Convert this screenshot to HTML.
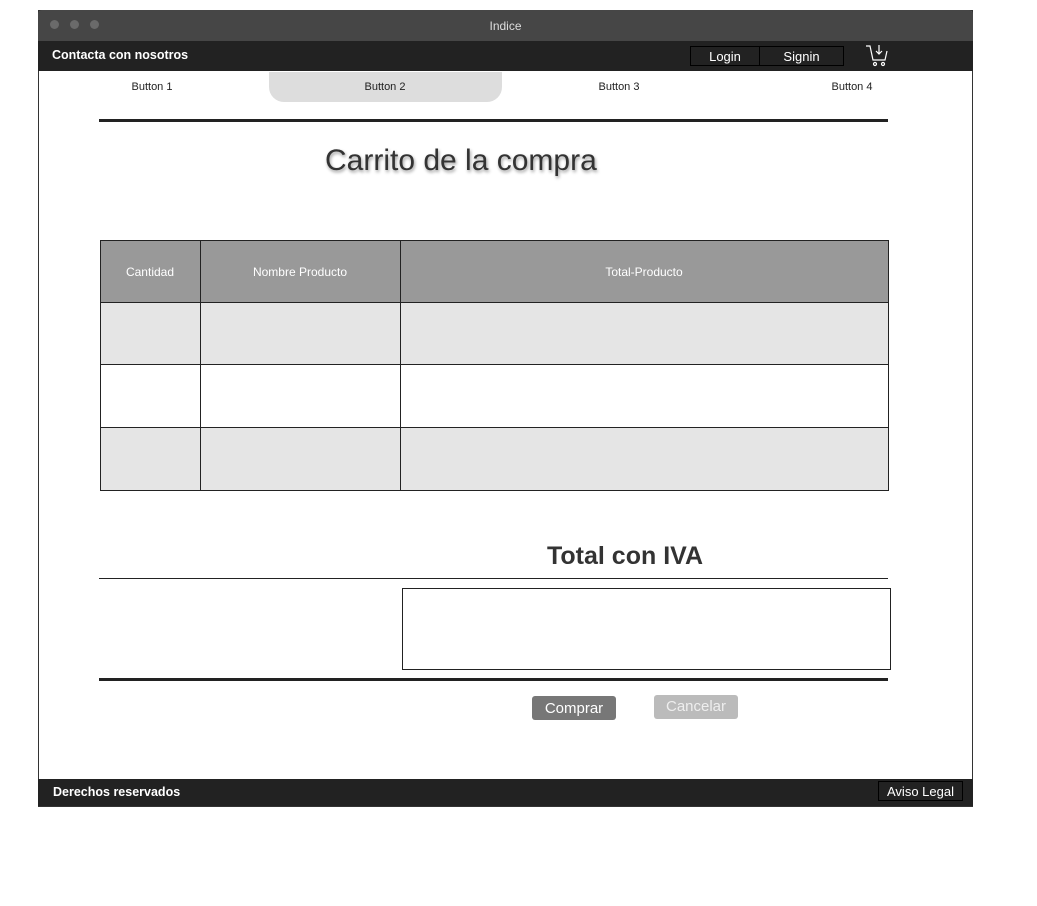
<!DOCTYPE html>
<html><head><style>
*{box-sizing:border-box;margin:0;padding:0}
body{width:1037px;height:906px;background:#fff;position:relative;font-family:"Liberation Sans",sans-serif;overflow:hidden}
.a{position:absolute}
</style></head><body>
<div class="a" style="left:38px;top:10px;width:935px;height:797px;border:1px solid #333;background:#fff"></div>
<div class="a" style="left:38px;top:10px;width:935px;height:31px;background:#464646;border-radius:4px 4px 0 0"></div>
<div class="a" style="left:50px;top:20px;width:9px;height:9px;border-radius:50%;background:#6a6a6a"></div>
<div class="a" style="left:70px;top:20px;width:9px;height:9px;border-radius:50%;background:#6a6a6a"></div>
<div class="a" style="left:90px;top:20px;width:9px;height:9px;border-radius:50%;background:#6a6a6a"></div>
<div class="a" style="left:38px;top:19px;width:935px;text-align:center;color:#ddd;font-size:12px">Indice</div>
<div class="a" style="left:38px;top:41px;width:935px;height:30px;background:#222"></div>
<div class="a" style="left:52px;top:48px;color:#fff;font-size:12.5px;font-weight:bold">Contacta con nosotros</div>
<div class="a" style="left:690px;top:46px;width:70px;height:20px;border:1px solid #000;color:#fff;font-size:13px;text-align:center;line-height:19px">Login</div>
<div class="a" style="left:759px;top:46px;width:85px;height:20px;border:1px solid #000;color:#fff;font-size:13px;text-align:center;line-height:19px">Signin</div>
<svg class="a" style="left:864px;top:43px" width="26" height="26" viewBox="0 0 26 26" fill="none" stroke="#fff" stroke-width="1.2"><path d="M2 3h4l3 14h12l2-9"/><path d="M15 2v9M12 8l3 3 3-3"/><circle cx="11" cy="21" r="1.5"/><circle cx="19" cy="21" r="1.5"/></svg>
<div class="a" style="left:269px;top:72px;width:233px;height:30px;background:#ddd;border-radius:0 0 15px 15px"></div>
<div class="a" style="left:92px;top:81px;width:120px;text-align:center;font-size:11px;color:#222">Button 1</div>
<div class="a" style="left:325px;top:81px;width:120px;text-align:center;font-size:11px;color:#222">Button 2</div>
<div class="a" style="left:559px;top:81px;width:120px;text-align:center;font-size:11px;color:#222">Button 3</div>
<div class="a" style="left:792px;top:81px;width:120px;text-align:center;font-size:11px;color:#222">Button 4</div>
<div class="a" style="left:99px;top:119px;width:789px;height:3px;background:#222"></div>
<div class="a" style="left:325px;top:144px;font-size:30px;color:#333;text-shadow:1px 2px 3px #999">Carrito de la compra</div>
<div class="a" style="left:100px;top:240px;width:789px;height:251px;border:1px solid #222"></div>
<div class="a" style="left:101px;top:241px;width:787px;height:61px;background:#999"></div>
<div class="a" style="left:101px;top:303px;width:787px;height:61px;background:#e5e5e5"></div>
<div class="a" style="left:101px;top:428px;width:787px;height:62px;background:#e5e5e5"></div>
<div class="a" style="left:100px;top:302px;width:789px;height:1px;background:#222"></div>
<div class="a" style="left:100px;top:364px;width:789px;height:1px;background:#222"></div>
<div class="a" style="left:100px;top:427px;width:789px;height:1px;background:#222"></div>
<div class="a" style="left:200px;top:240px;width:1px;height:251px;background:#222"></div>
<div class="a" style="left:400px;top:240px;width:1px;height:251px;background:#222"></div>
<div class="a" style="left:100px;top:265px;width:100px;text-align:center;color:#fff;font-size:12px">Cantidad</div>
<div class="a" style="left:200px;top:265px;width:200px;text-align:center;color:#fff;font-size:12px">Nombre Producto</div>
<div class="a" style="left:400px;top:265px;width:488px;text-align:center;color:#fff;font-size:12px">Total-Producto</div>
<div class="a" style="left:547px;top:542px;font-size:25px;font-weight:bold;color:#333">Total con IVA</div>
<div class="a" style="left:99px;top:578px;width:789px;height:1px;background:#222"></div>
<div class="a" style="left:402px;top:588px;width:489px;height:82px;border:1px solid #222"></div>
<div class="a" style="left:99px;top:678px;width:789px;height:3px;background:#222"></div>
<div class="a" style="left:532px;top:696px;width:84px;height:24px;background:#777;border-radius:3px;color:#fff;font-size:15px;text-align:center;line-height:25px">Comprar</div>
<div class="a" style="left:654px;top:695px;width:84px;height:24px;background:#bbb;border-radius:3px;color:#eee;font-size:15px;text-align:center;line-height:24px">Cancelar</div>
<div class="a" style="left:38px;top:779px;width:935px;height:27px;background:#222"></div>
<div class="a" style="left:53px;top:785px;color:#fff;font-size:12.5px;font-weight:bold">Derechos reservados</div>
<div class="a" style="left:878px;top:781px;width:85px;height:20px;border:1px solid #000;color:#fff;font-size:13px;text-align:center;line-height:19px">Aviso Legal</div>
</body></html>
